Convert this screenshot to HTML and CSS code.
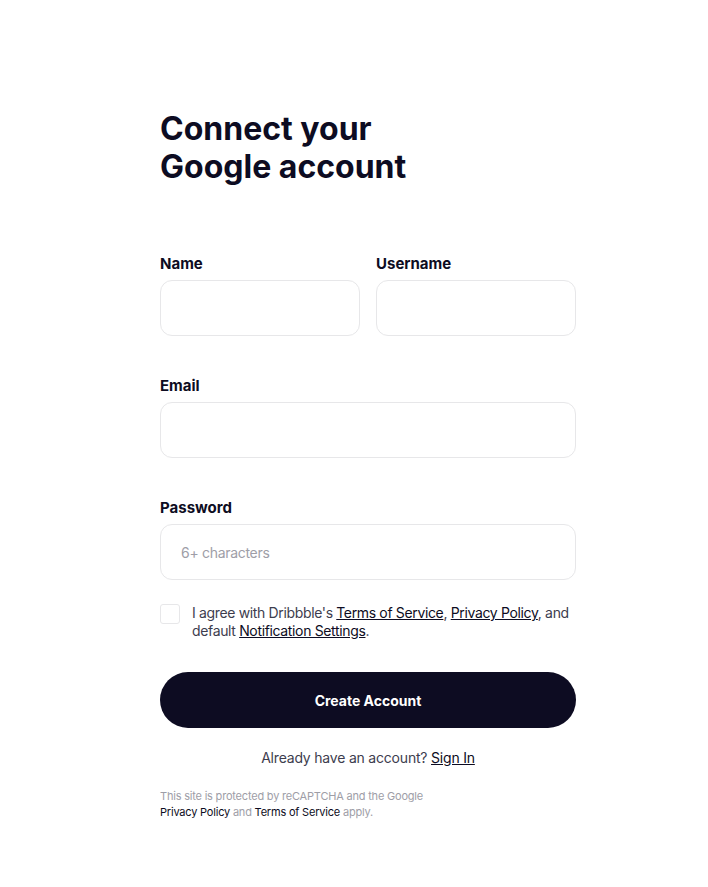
FILE: index.html
```html
<!DOCTYPE html>
<html lang="en">
<head>
<meta charset="utf-8">
<title>Connect your Google account</title>
<link rel="stylesheet" href="styles.css">
</head>
<body>
<main class="page">
  <form class="signup">
    <h1 class="title">Connect your<br>Google account</h1>
    <div class="row">
      <div class="field">
        <label class="label" for="name">Name</label>
        <input class="input" id="name" type="text">
      </div>
      <div class="field">
        <label class="label" for="username">Username</label>
        <input class="input" id="username" type="text">
      </div>
    </div>
    <div class="field">
      <label class="label" for="email">Email</label>
      <input class="input" id="email" type="email">
    </div>
    <div class="field">
      <label class="label" for="password">Password</label>
      <input class="input" id="password" type="password" placeholder="6+ characters">
    </div>
    <div class="agree">
      <span class="checkbox"></span>
      <p class="agree-text">I agree with Dribbble's <a href="#">Terms of Service</a>, <a href="#">Privacy Policy</a>, and default <a href="#">Notification Settings</a>.</p>
    </div>
    <button class="submit" type="button">Create Account</button>
    <p class="signin">Already have an account? <a href="#">Sign In</a></p>
    <p class="captcha">This site is protected by reCAPTCHA and the Google<br><a href="#">Privacy Policy</a> and <a href="#">Terms of Service</a> apply.</p>
  </form>
</main>
</body>
</html>
```
FILE: styles.css
```css
* { box-sizing: border-box; }
html, body { margin: 0; padding: 0; background: #fff; }
body {
  font-family: Inter, "Noto Sans", sans-serif;
  color: #0d0c22;
}
.page {
  padding: 110px 0 40px 160px;
}
.signup {
  width: 416px;
  display: flex;
  flex-direction: column;
}
.title {
  margin: 0 0 68px;
  font-size: 32px;
  line-height: 38px;
  font-weight: 700;
  letter-spacing: 0;
}
.row {
  display: flex;
  gap: 16px;
}
.row .field { flex: 1; }
.field {
  display: flex;
  flex-direction: column;
  gap: 6px;
  margin-bottom: 40px;
}
.label {
  font-size: 15px;
  line-height: 20px;
  font-weight: 700;
}
.input {
  height: 56px;
  width: 100%;
  border: 1px solid #e7e7e9;
  border-radius: 12px;
  padding: 0 20px;
  font-family: inherit;
  font-size: 14px;
  letter-spacing: -0.3px;
  color: #0d0c22;
  background: #fff;
  outline: none;
}
.input::placeholder { color: #9e9ea7; }
.field:last-of-type { margin-bottom: 0; }
.agree {
  display: flex;
  gap: 12px;
  margin: -16px 0 32px;
}
.checkbox {
  flex: none;
  width: 20px;
  height: 20px;
  border: 1px solid #e7e7e9;
  border-radius: 3px;
}
.agree-text {
  margin: 0;
  font-size: 14px;
  line-height: 18px;
  letter-spacing: -0.35px;
  color: #3d3d4e;
}
.agree-text a, .signin a {
  color: #0d0c22;
  text-decoration: underline;
}
.submit {
  height: 56px;
  border: 0;
  border-radius: 28px;
  background: #0d0c22;
  color: #fff;
  font-family: inherit;
  font-size: 14px;
  font-weight: 700;
}
.signin {
  margin: 20px 0 0;
  text-align: center;
  font-size: 14px;
  line-height: 20px;
  letter-spacing: -0.2px;
  color: #3d3d4e;
}
.captcha {
  margin: 20px 0 0;
  font-size: 11px;
  line-height: 16px;
  letter-spacing: -0.2px;
  color: #9e9ea7;
}
.captcha a {
  color: #0d0c22;
  text-decoration: none;
}
```
